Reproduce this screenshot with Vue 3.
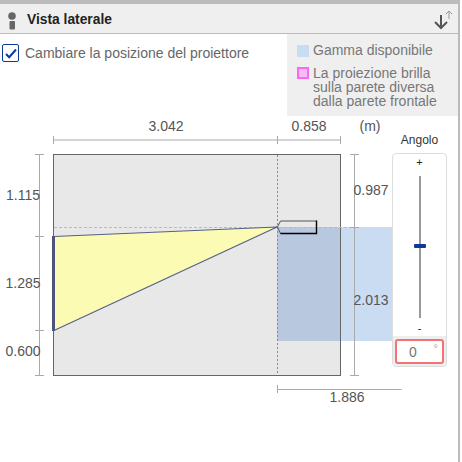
<script setup>
const legend = [
  { key: "range", text: "Gamma disponibile" },
  { key: "warn", text: "La proiezione brilla sulla parete diversa dalla parete frontale" },
];
</script>

<template>
  <div class="panel">
    <header class="head">
      <svg class="info" width="10" height="22" viewBox="0 0 10 22">
        <circle cx="5" cy="8" r="3.8" fill="#666" />
        <rect x="2.5" y="13" width="5.5" height="8.5" rx="1" fill="#666" />
      </svg>
      <span class="title">Vista laterale</span>
      <svg class="swap" width="20" height="22" viewBox="0 0 20 22" fill="none">
        <path d="M8 7V20M2 14l6 6 6-6" stroke="#555" stroke-width="2" />
        <path d="M16 11V3M12.8 6.2 16 3l3.2 3.2" stroke="#999" stroke-width="1" />
      </svg>
    </header>

    <div class="top">
      <label class="check">
        <span class="box">
          <svg width="12" height="11" viewBox="0 0 12 11" fill="none">
            <path d="M1 6 4.2 9.2 11 1.5" stroke="#0b3a9c" stroke-width="2" />
          </svg>
        </span>
        Cambiare la posizione del proiettore
      </label>
      <ul class="legend">
        <li v-for="item in legend" :key="item.key" class="legend-row">
          <i :class="['swatch', `swatch--${item.key}`]"></i>
          <span>{{ item.text }}</span>
        </li>
      </ul>
    </div>

    <div class="diagram">
      <svg class="canvas" width="458" height="346" viewBox="0 116 458 346">
        <rect x="53.5" y="154.5" width="287" height="221" fill="#e8e8e8" />
        <rect x="277" y="227" width="115" height="114" fill="#c9dcf1" />
        <rect x="277" y="227" width="63" height="114" fill="#b8c9df" />
        <rect x="53.5" y="154.5" width="287" height="221" fill="none" stroke="#666" />

        <path d="M277.5 155V375" stroke="#888" stroke-dasharray="2 2" />
        <path d="M54 227.5H359" stroke="#bbb" stroke-dasharray="3 2" />

        <polygon points="54,236.5 277,227 54,330.5" fill="#fbfbb4" />
        <path d="M54 236.5 277 227 54 330.5" fill="none" stroke="#565f85" stroke-width="1.2" />
        <path d="M53.5 236V331" stroke="#4c5580" stroke-width="3" />

        <path d="M277.5 227 280.5 221H316.5V233.5H280.5Z" fill="none" stroke="#555" />
        <path d="M316.5 220.5V233.5H280.5" fill="none" stroke="#000" stroke-width="1.4" />

        <g stroke="#aaa" fill="none">
          <path d="M53.5 136V144M53.5 140H340.5M277.5 136V144M340.5 136V144" />
          <path d="M35 154.5H44M39.5 154.5V375.5M35 236.5H44M35 330.5H44M35 375.5H44" />
          <path d="M350 154.5H359M354.5 154.5V375.5M350 227.5H359M350 375.5H359" />
          <path d="M277.5 385V393M277.5 389.5H401.5" />
        </g>

        <g class="num">
          <text x="166" y="131" text-anchor="middle">3.042</text>
          <text x="309" y="131" text-anchor="middle">0.858</text>
          <text x="370" y="131" text-anchor="middle">(m)</text>
          <text x="23" y="200" text-anchor="middle">1.115</text>
          <text x="23" y="288" text-anchor="middle">1.285</text>
          <text x="23" y="356" text-anchor="middle">0.600</text>
          <text x="371" y="195" text-anchor="middle">0.987</text>
          <text x="371" y="305" text-anchor="middle">2.013</text>
          <text x="347" y="402" text-anchor="middle">1.886</text>
        </g>
      </svg>

      <div class="angle">
        <span class="angle-label">Angolo</span>
        <div class="slider">
          <span class="sign sign--plus">+</span>
          <div class="track"><i class="thumb"></i></div>
          <span class="sign sign--minus">-</span>
          <div class="foot">
            <div class="input"><span>0</span><sup>°</sup></div>
          </div>
        </div>
      </div>
    </div>
  </div>
</template>

<style scoped>
.panel {
  width: 460px;
  height: 462px;
  box-sizing: border-box;
  border-top: 4px solid #bbb;
  border-right: 2px solid #bbb;
  font-family: "Liberation Sans", Arial, sans-serif;
  background: #fff;
}

.head {
  height: 30px;
  box-sizing: border-box;
  display: flex;
  align-items: center;
  padding: 1px 5px 0 7px;
  background: #efefef;
  border-bottom: 1px solid #bbb;
}

.title {
  margin-left: 10px;
  font-size: 13.8px;
  font-weight: bold;
  color: #222;
}

.swap {
  margin-left: auto;
}

.top {
  display: flex;
  height: 82px;
}

.check {
  flex: 1;
  display: flex;
  align-items: flex-start;
  gap: 6px;
  padding: 10px 0 0 2px;
  font-size: 14px;
  line-height: 18px;
  color: #666;
}

.box {
  width: 15px;
  height: 16px;
  flex: none;
  display: flex;
  align-items: center;
  justify-content: center;
  border: 1px solid #0b3a9c;
  border-radius: 2px;
  background: #fff;
}

.legend {
  width: 171px;
  box-sizing: border-box;
  margin: 0;
  padding: 9px 0 0 10px;
  list-style: none;
  background: #efefef;
  font-size: 14px;
  line-height: 14px;
  color: #777;
}

.legend-row {
  display: flex;
  gap: 4px;
  margin-bottom: 9px;
}

.swatch {
  width: 12px;
  height: 12px;
  flex: none;
  box-sizing: border-box;
}

.swatch--range {
  margin-top: 2px;
  background: #c9dcf1;
}

.swatch--warn {
  margin-top: 1px;
  background: #f6bdf0;
  border: 2px solid #ff66f0;
}

.diagram {
  position: relative;
  height: 346px;
}

.canvas {
  display: block;
}

.num {
  font-size: 14px;
  fill: #555;
}

.angle {
  position: absolute;
  left: 392px;
  top: 17px;
  width: 55px;
  display: flex;
  flex-direction: column;
  align-items: center;
}

.angle-label {
  font-size: 12px;
  line-height: 14px;
  color: #333;
  margin-bottom: 6px;
}

.slider {
  width: 55px;
  height: 214px;
  box-sizing: border-box;
  display: flex;
  flex-direction: column;
  align-items: center;
  padding-top: 2px;
  background: #fff;
  border: 1px solid #ddd;
  border-radius: 4px;
  overflow: hidden;
}

.sign {
  font-size: 11px;
  line-height: 12px;
  color: #222;
}

.track {
  position: relative;
  flex: 1;
  width: 2px;
  margin: 8px 0 4px;
  background: #999;
}

.thumb {
  position: absolute;
  left: -5px;
  top: 68px;
  width: 12px;
  height: 4px;
  border-radius: 1px;
  background: #0b3a9c;
}

.foot {
  width: 100%;
  box-sizing: border-box;
  margin-top: 2px;
  padding: 3px 2px 2px;
  background: #eee;
}

.input {
  height: 25px;
  box-sizing: border-box;
  display: flex;
  align-items: center;
  padding-left: 12px;
  border: 2px solid #f27474;
  border-radius: 3px;
  background: #fff;
  font-size: 14px;
  color: #777;
  position: relative;
}

.input sup {
  position: absolute;
  right: 4px;
  top: 1px;
  font-size: 11px;
  color: #aaa;
}
</style>

<style>
html,
body {
  background: #fff;
}
</style>
